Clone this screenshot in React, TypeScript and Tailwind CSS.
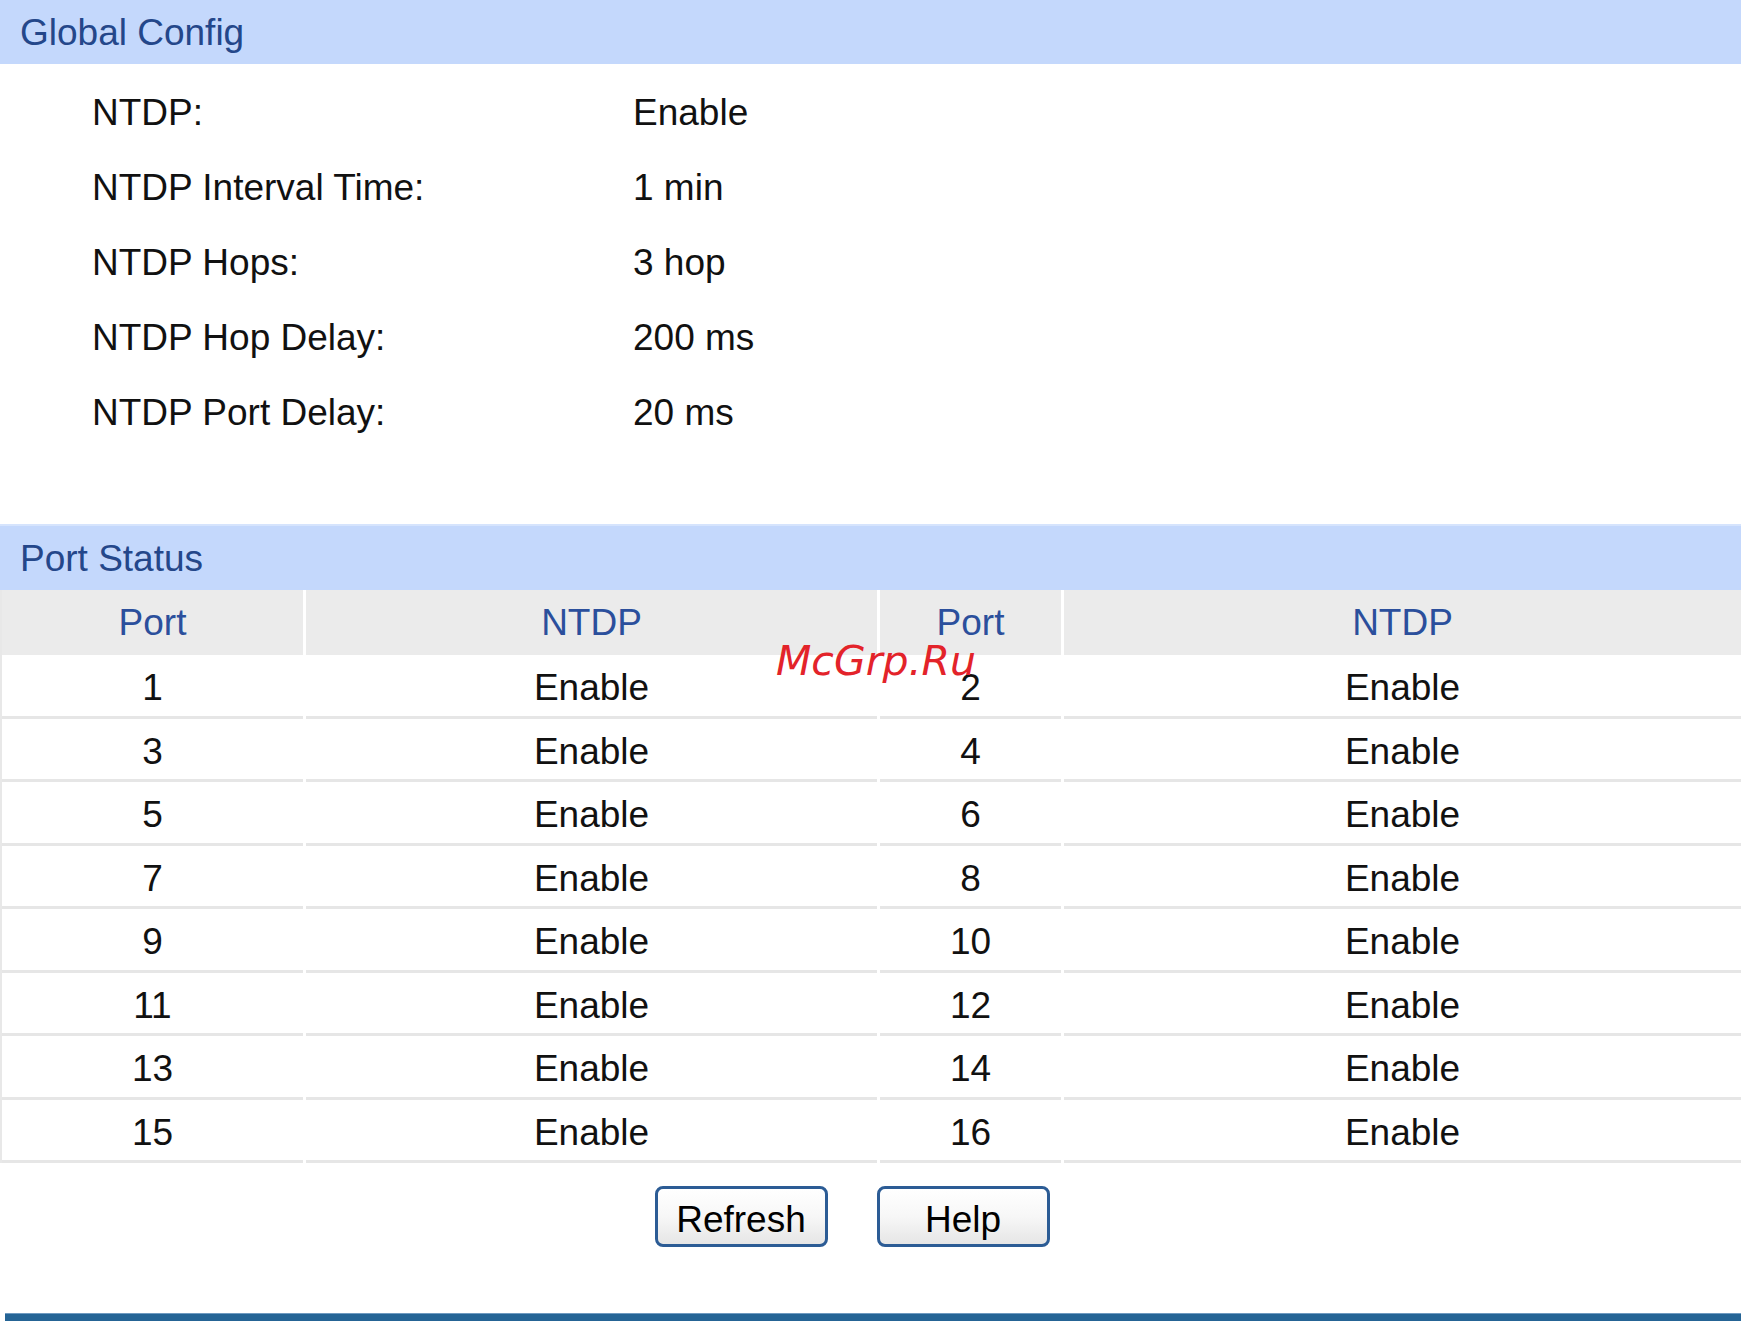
import React from "react";

const globalRows: [string, string][] = [
  ["NTDP:", "Enable"],
  ["NTDP Interval Time:", "1 min"],
  ["NTDP Hops:", "3 hop"],
  ["NTDP Hop Delay:", "200 ms"],
  ["NTDP Port Delay:", "20 ms"],
];

const ports = [1, 3, 5, 7, 9, 11, 13, 15];

export default function App() {
  return (
    <div className="relative w-[1741px] h-[1321px] bg-white overflow-hidden font-['Liberation_Sans',Arial,sans-serif] text-[37px] text-[#111] flex flex-col">
      {/* Global Config header */}
      <div className="h-[64px] bg-[#c4d8fc] flex items-center pl-[20px] pt-[2px] text-[#24478a]">
        Global Config
      </div>
      <div className="pt-[11px] pb-[74px] pl-[92px]">
        {globalRows.map(([k, v]) => (
          <div key={k} className="h-[75px] grid grid-cols-[541px_1fr] items-center">
            <span>{k}</span>
            <span>{v}</span>
          </div>
        ))}
      </div>

      {/* Port Status header */}
      <div className="h-[66px] bg-[#c4d8fc] border-t-[2px] border-[#d6e4fd] flex items-center pl-[20px] pt-[2px] text-[#24478a]">
        Port Status
      </div>

      <div className="grid grid-cols-[301px_571px_181px_1fr] gap-x-[3px] border-l-[2px] border-[#e8e8e8]">
        {["Port", "NTDP", "Port", "NTDP"].map((h, i) => (
          <div
            key={i}
            className="h-[65px] bg-[#ebebeb] flex items-center justify-center text-[#2b4f9c]"
          >
            {h}
          </div>
        ))}
        {ports.map((p) => (
          <React.Fragment key={p}>
            <div className="h-[63.5px] pt-[5px] border-b-[3px] border-[#e6e6e6] flex items-center justify-center">
              {p}
            </div>
            <div className="h-[63.5px] pt-[5px] border-b-[3px] border-[#e6e6e6] flex items-center justify-center">
              Enable
            </div>
            <div className="h-[63.5px] pt-[5px] border-b-[3px] border-[#e6e6e6] flex items-center justify-center">
              {p + 1}
            </div>
            <div className="h-[63.5px] pt-[5px] border-b-[3px] border-[#e6e6e6] flex items-center justify-center">
              Enable
            </div>
          </React.Fragment>
        ))}
      </div>

      {/* Buttons */}
      <div className="mt-[23px] flex justify-center gap-[49px] pr-[37px]">
        {["Refresh", "Help"].map((b) => (
          <button
            key={b}
            className="w-[173px] h-[61px] pt-[6px] rounded-[8px] border-[3px] border-[#2c5c95] bg-gradient-to-b from-white via-[#f7f7f7] to-[#e6e6e6] flex items-center justify-center text-[37px] text-black leading-none"
          >
            {b}
          </button>
        ))}
      </div>

      <div className="flex-1" />
      {/* Bottom bar */}
      <div className="ml-[5px] h-[8px] bg-[#256495] border-t-[1px] border-[#6f9ac0]" />

      {/* Watermark */}
      <div className="absolute left-[776px] top-[641px] text-[41px] leading-none italic text-[#e3232a] font-['DejaVu_Sans',sans-serif] pointer-events-none">
        McGrp.Ru
      </div>
    </div>
  );
}
